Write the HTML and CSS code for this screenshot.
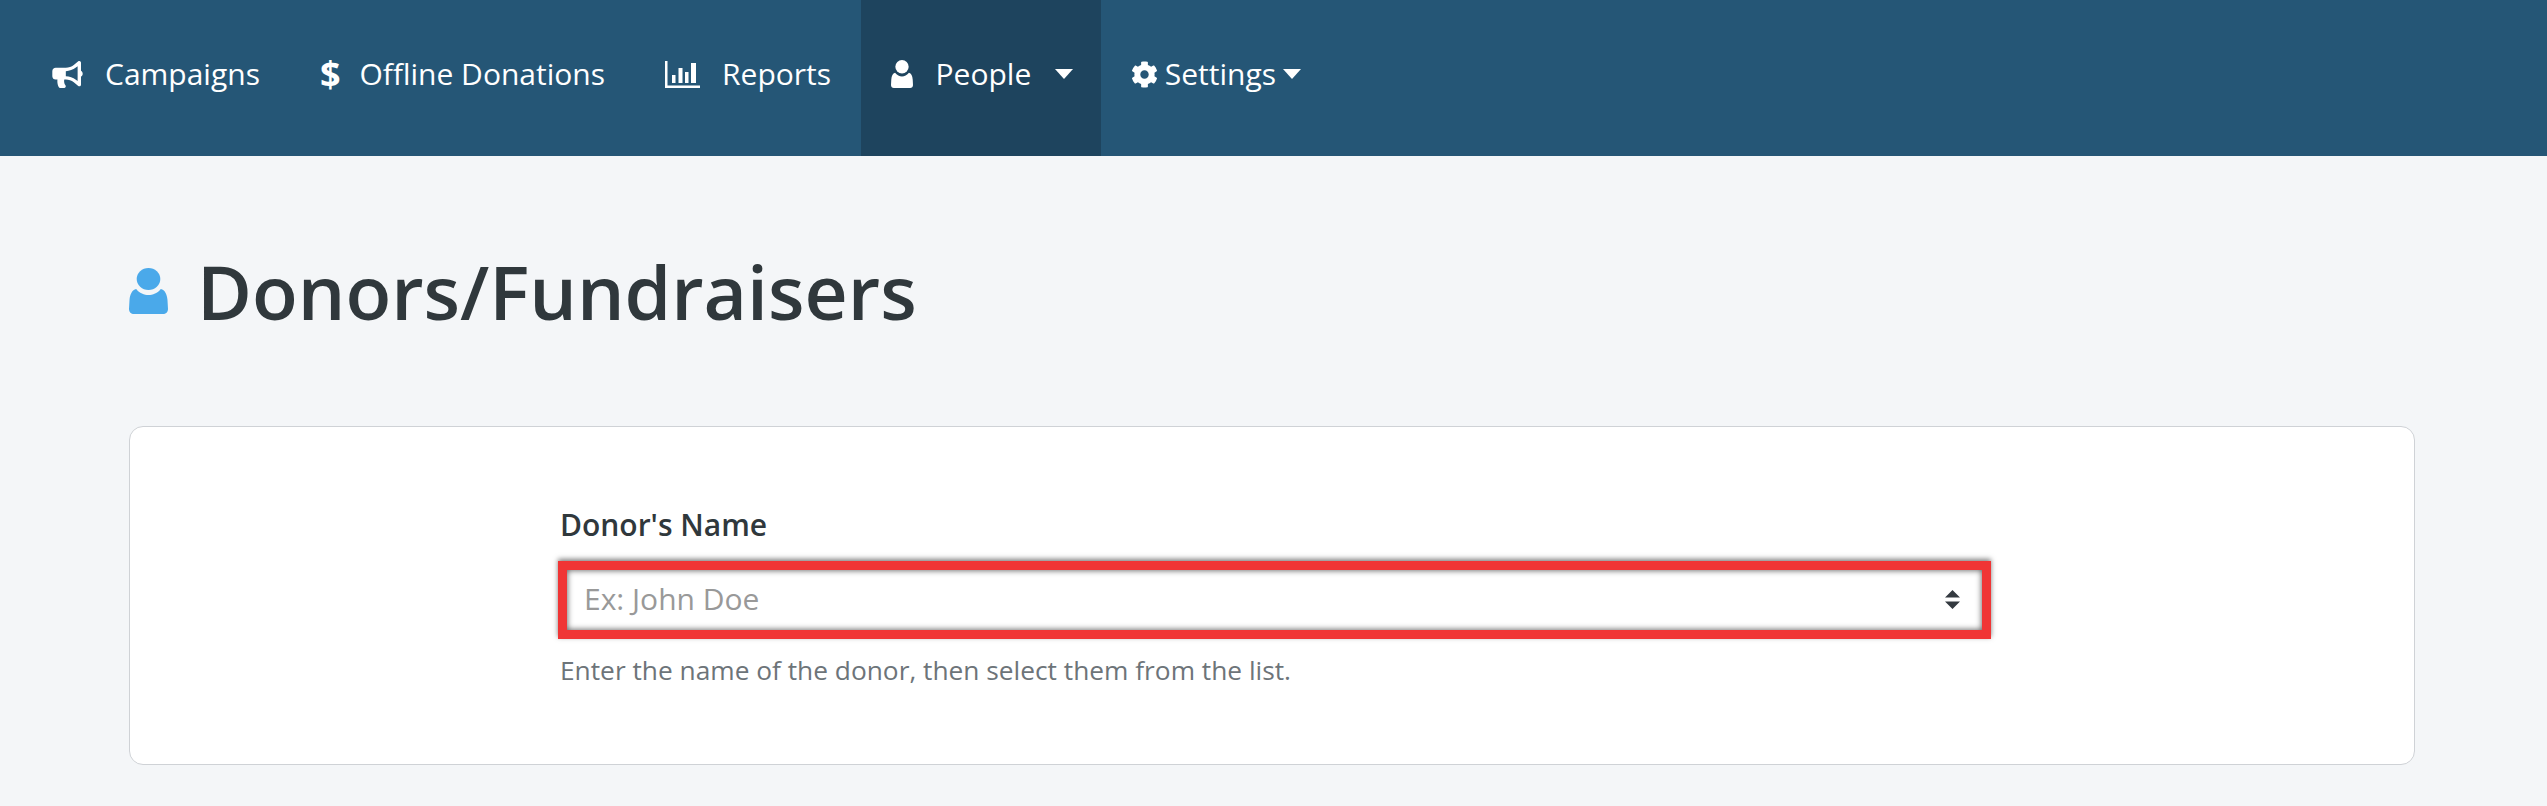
FILE: index.html
```html
<!DOCTYPE html>
<html>
<head>
  <meta charset="utf-8">
  <title>Donors/Fundraisers</title>
  <link rel="stylesheet" href="styles.css">
</head>
<body>
  <svg class="defs" width="0" height="0">
    <symbol id="person" viewBox="0 0 38 46" preserveAspectRatio="none">
      <ellipse cx="19" cy="11" rx="11.500" ry="11"/>
      <path d="M7 21C10 25 15 27 19 27C23 27 28 25 31 21C35 22 37 26 37.500 32L38 41C38 44 36 46 33 46L5 46C2 46 0 44 0 41L.5 32C1 26 3 22 7 21Z"/>
    </symbol>
  </svg>

  <nav class="topnav">
    <a class="nav-item">
      <svg class="icon icon-bullhorn" viewBox="0 0 576 512"><path d="M576 240c0-23.63-12.95-44.04-32-55.12V32.01C544 23.26 537.02 0 512 0c-7.12 0-14.19 2.38-19.98 7.02l-85.03 68.03C364.28 109.19 310.66 128 256 128H64c-35.35 0-64 28.65-64 64v96c0 35.35 28.65 64 64 64h33.7c-1.39 10.48-2.18 21.14-2.18 32 0 39.77 9.26 77.35 25.56 110.94 5.19 10.69 16.52 17.06 28.4 17.06h74.28c26.05 0 41.69-29.84 25.9-50.56-16.4-21.52-26.15-48.36-26.15-77.44 0-11.11 1.62-21.79 4.41-32H256c54.66 0 108.28 18.81 150.98 52.95l85.03 68.03a32.023 32.023 0 0 0 19.98 7.02c24.92 0 32-22.78 32-32V295.13C563.05 284.04 576 263.63 576 240zm-96 141.42l-33.05-26.44C392.95 311.78 325.12 288 256 288v-96c69.12 0 136.95-23.78 190.95-66.98L480 98.58v282.84z"/></svg>
      <span>Campaigns</span>
    </a>
    <a class="nav-item">
      <span class="icon-dollar">$</span>
      <span>Offline Donations</span>
    </a>
    <a class="nav-item">
      <svg class="icon icon-chart" viewBox="0 0 35 27"><path d="M0 0h2.500v24.500H35V27H0z"/><path d="M7 14h3.500v8H7zM13.500 7h4v15h-4zM20 11h3.500v11H20zM26 2h5v20h-5z"/></svg>
      <span>Reports</span>
    </a>
    <a class="nav-item active">
      <svg class="icon icon-person"><use href="#person"/></svg>
      <span>People</span>
      <i class="caret caret-wide"></i>
    </a>
    <a class="nav-item">
      <svg class="icon icon-cog" viewBox="0 0 512 512"><path d="M487.4 315.7l-42.6-24.6c4.3-23.2 4.3-47 0-70.2l42.6-24.6c4.9-2.8 7.1-8.6 5.5-14-11.1-35.6-30-67.8-54.7-94.6-3.8-4.1-10-5.1-14.8-2.3L380.8 110c-17.9-15.4-38.5-27.3-60.8-35.1V25.800c0-5.6-3.9-10.5-9.4-11.7-36.7-8.2-74.3-7.8-109.2 0-5.5 1.2-9.4 6.1-9.4 11.7V75c-22.2 7.9-42.8 19.8-60.8 35.1L88.7 85.5c-4.9-2.8-11-1.9-14.8 2.3-24.7 26.7-43.6 58.9-54.7 94.6-1.7 5.4.6 11.2 5.500 14L67.300 221c-4.3 23.2-4.3 47 0 70.2l-42.6 24.6c-4.9 2.8-7.1 8.6-5.5 14 11.1 35.6 30 67.8 54.7 94.6 3.8 4.1 10 5.1 14.8 2.3l42.6-24.6c17.9 15.4 38.5 27.3 60.8 35.1v49.2c0 5.6 3.9 10.5 9.4 11.7 36.7 8.2 74.3 7.8 109.2 0 5.5-1.2 9.4-6.1 9.4-11.7v-49.2c22.2-7.9 42.8-19.8 60.8-35.1l42.6 24.6c4.9 2.8 11 1.9 14.8-2.3 24.7-26.7 43.6-58.9 54.7-94.6 1.5-5.5-.7-11.3-5.6-14.1zM256 336c-44.1 0-80-35.9-80-80s35.9-80 80-80 80 35.9 80 80-35.9 80-80 80z"/></svg>
      <span>Settings</span>
      <i class="caret"></i>
    </a>
  </nav>

  <main class="content">
    <h1 class="page-title">
      <svg class="title-icon"><use href="#person"/></svg>
      <span>Donors/Fundraisers</span>
    </h1>

    <section class="card">
      <label class="field-label" for="donor">Donor's Name</label>
      <div class="select-box">
        <input id="donor" class="select-input" type="text" placeholder="Ex: John Doe">
        <svg class="select-arrows" viewBox="0 0 15 19"><path d="M7.500 0L15 7.500H0zM0 11.500h15L7.500 19z"/></svg>
      </div>
      <p class="field-hint">Enter the name of the donor, then select them from the list.</p>
    </section>
  </main>
</body>
</html>
```

FILE: styles.css
```css
* {
  box-sizing: border-box;
}

body {
  margin: 0;
  background-color: #f4f6f8;
  color: #30383c;
  font-family: "Open Sans", "Noto Sans", sans-serif;
}

.defs {
  display: block;
  height: 0;
}

/* top bar */
.topnav {
  display: flex;
  height: 156px;
  padding-left: 22px;
  background-color: #255676;
}

.nav-item {
  display: flex;
  align-items: center;
  padding: 0 30px 8px;
  color: #fff;
  font-size: 30px;
  line-height: 40px;
}

.nav-item.active {
  padding-right: 28px;
  background-color: #1e445e;
}

.icon {
  flex: none;
  fill: #fff;
}

.icon-bullhorn {
  width: 31px;
  height: 27px;
  margin-right: 22px;
}

.icon-dollar {
  width: 18px;
  margin-right: 21.5px;
  font-size: 36px;
  font-weight: 700;
  text-align: center;
}

.icon-chart {
  width: 35px;
  height: 27px;
  margin-right: 22px;
}

.icon-person {
  width: 22px;
  height: 28px;
  margin-right: 22.5px;
}

.icon-cog {
  width: 27px;
  height: 27px;
  margin-right: 7px;
}

.caret {
  width: 0;
  height: 0;
  margin-left: 7px;
  border-top: 10px solid #fff;
  border-left: 9px solid transparent;
  border-right: 9px solid transparent;
}

.caret-wide {
  margin-left: 23.5px;
}

/* page */
.content {
  margin: 0 132px 0 129px;
  padding: 85px 0 42px;
}

.page-title {
  display: flex;
  align-items: center;
  margin: 0 0 85px;
  font-size: 75px;
  font-weight: 600;
  line-height: 100px;
}

.title-icon {
  width: 39px;
  height: 46px;
  margin-right: 29px;
  fill: #4aa9ea;
}

.card {
  padding: 78px 423px 76px 428px;
  background-color: #fff;
  border: 1px solid #cfd2d6;
  border-radius: 14px;
}

.field-label {
  display: block;
  margin-bottom: 16px;
  padding-left: 2px;
  font-size: 30px;
  font-weight: 600;
  line-height: 40px;
}

.select-box {
  position: relative;
  height: 78px;
  box-shadow: 0 -2px 5px rgba(0, 0, 0, 0.5);
}

.select-input {
  display: block;
  width: 100%;
  height: 100%;
  padding: 0 60px 4px 17px;
  border: 9px solid #f03535;
  outline: none;
  box-shadow: inset 0 0 6px rgba(0, 0, 0, 0.7);
  font-family: inherit;
  font-size: 30px;
  color: #30383c;
}

.select-input::placeholder {
  color: #999;
  opacity: 1;
}

.select-arrows {
  position: absolute;
  top: 29px;
  right: 31px;
  width: 15px;
  height: 19px;
  fill: #343a40;
}

.field-hint {
  margin: 13px 0 0;
  padding-left: 2px;
  color: #6d7479;
  font-size: 26.3px;
  line-height: 36px;
}
```
